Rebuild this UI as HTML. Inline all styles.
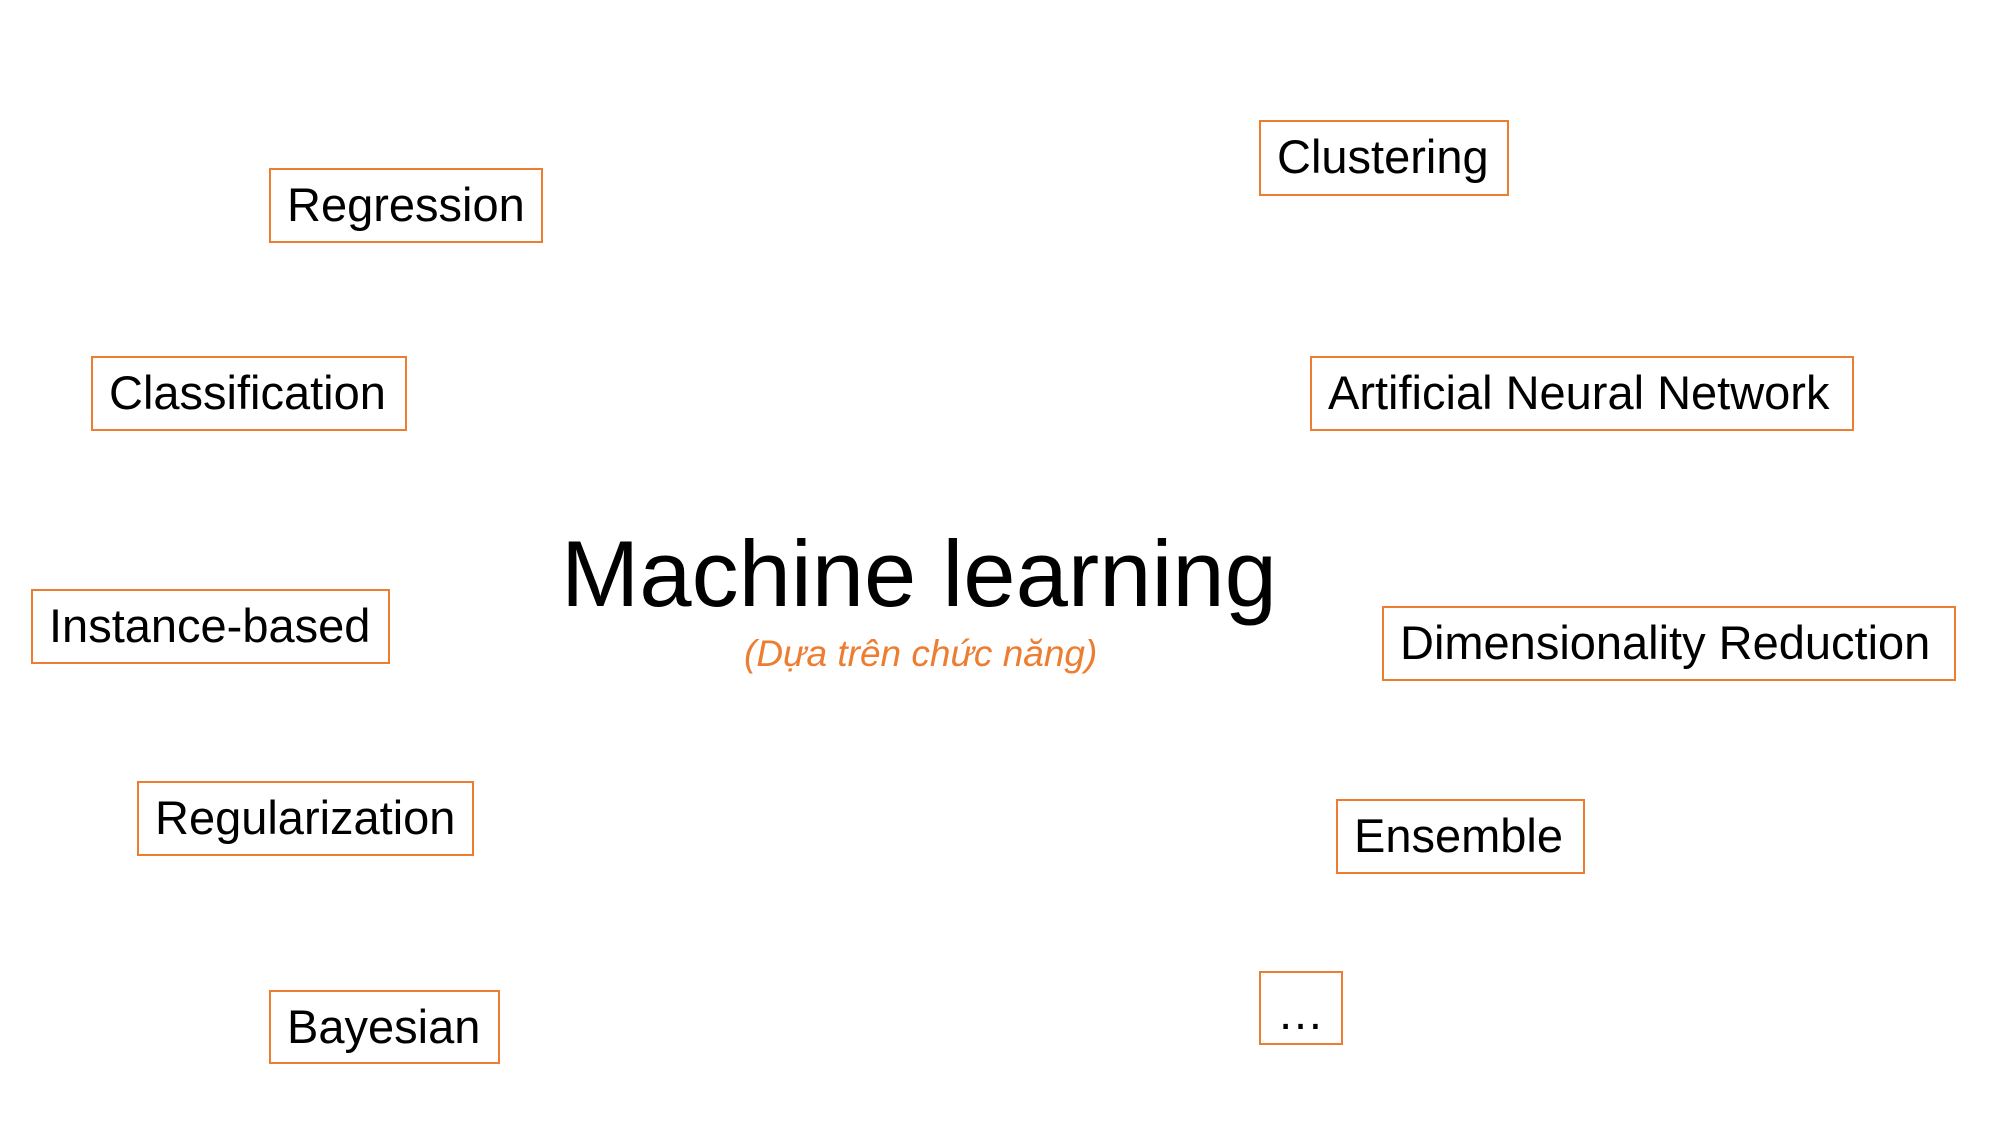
<!DOCTYPE html>
<html><head><meta charset="utf-8"><style>
html,body{margin:0;padding:0;background:#fff;width:2000px;height:1134px;overflow:hidden;position:relative;font-family:"Liberation Sans",Arial,sans-serif}
.b{position:absolute;box-sizing:border-box;border:2px solid #ED7D31;font-size:47px;color:#000;padding-left:16px;white-space:nowrap;line-height:70px}
#t{position:absolute;left:561px;top:527px;font-size:94px;line-height:94px;color:#000;white-space:nowrap}
#s{position:absolute;left:744px;top:634px;font-size:37px;line-height:40px;color:#ED7D31;font-style:italic;white-space:nowrap}
</style></head><body>
<div class="b" style="left:269px;top:168px;width:274px;height:75px">Regression</div>
<div class="b" style="left:91px;top:356px;width:316px;height:75px">Classification</div>
<div class="b" style="left:31px;top:589px;width:359px;height:75px">Instance-based</div>
<div class="b" style="left:137px;top:781px;width:337px;height:75px">Regularization</div>
<div class="b" style="left:269px;top:990px;width:231px;height:74px">Bayesian</div>
<div class="b" style="left:1259px;top:120px;width:250px;height:76px">Clustering</div>
<div class="b" style="left:1310px;top:356px;width:544px;height:75px">Artificial Neural Network</div>
<div class="b" style="left:1382px;top:606px;width:574px;height:75px">Dimensionality Reduction</div>
<div class="b" style="left:1336px;top:799px;width:249px;height:75px">Ensemble</div>
<div class="b" style="left:1259px;top:971px;width:84px;height:74px;line-height:80px">…</div>
<div id="t">Machine learning</div>
<div id="s">(Dựa trên chức năng)</div>
</body></html>
